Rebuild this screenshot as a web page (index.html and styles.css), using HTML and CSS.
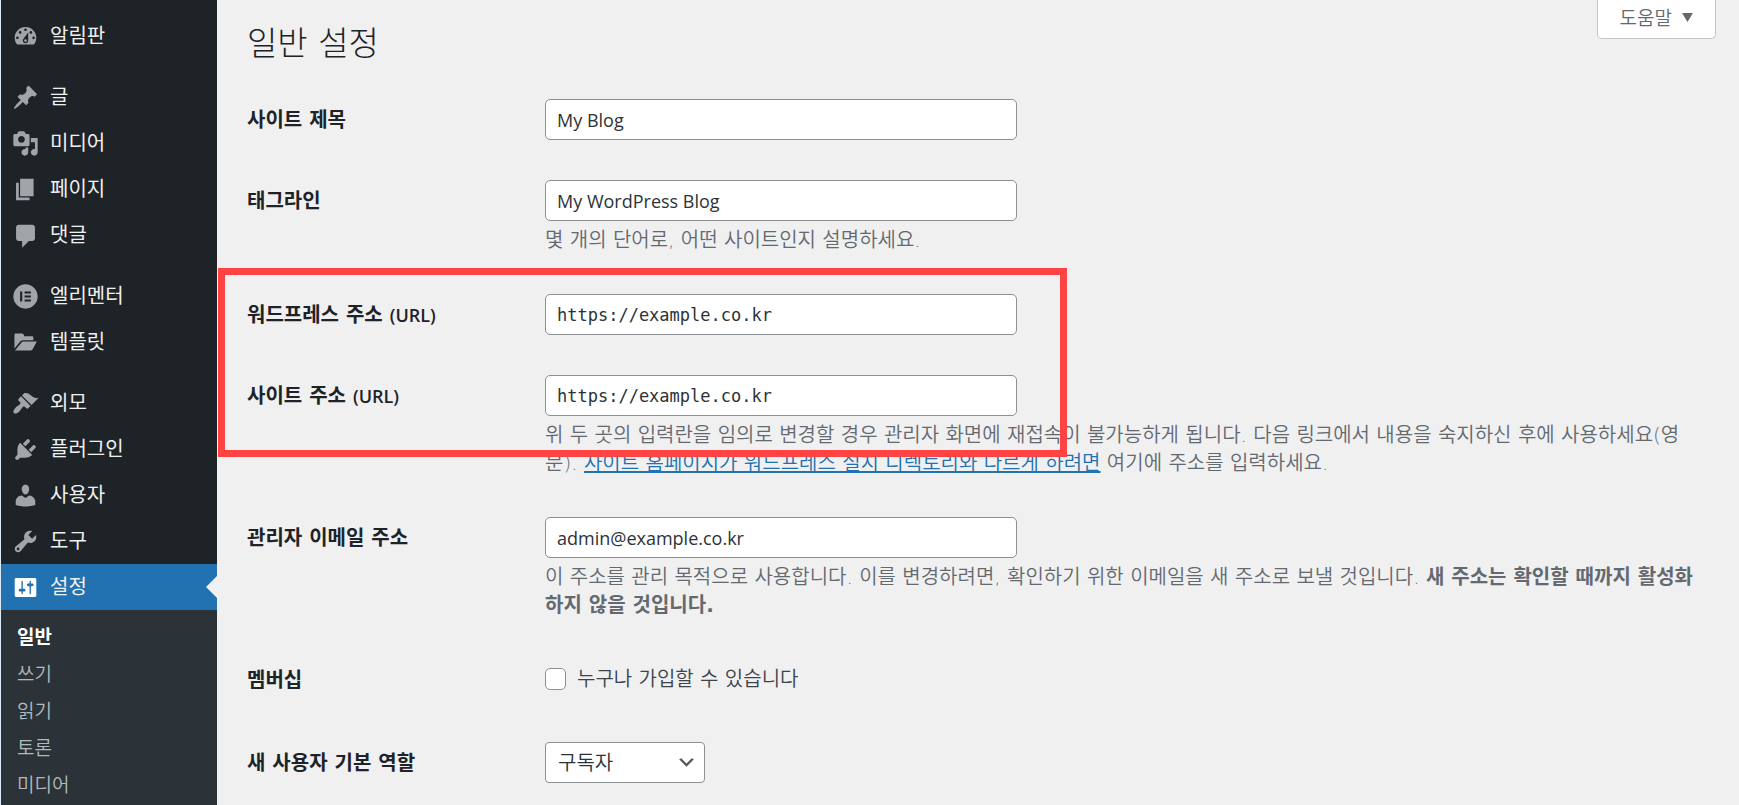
FILE: index.html
```html
<!DOCTYPE html>
<html lang="ko">
<head>
  <meta charset="UTF-8" />
  <meta name="viewport" content="width=device-width, initial-scale=1.0"/>
  <title>일반 설정</title>
  <link rel="stylesheet" href="styles.css">
</head>
<body>

  <div class="layout">
    <!-- Admin menu -->
    <nav class="sidebar">
      <ul class="menu">
        <li><a href="#"><svg viewBox="0 0 20 20"><path d="M3.76 16h12.48c1.1-1.37 1.76-3.11 1.76-5 0-4.42-3.58-8-8-8s-8 3.58-8 8c0 1.89.66 3.63 1.76 5zM10 4c.55 0 1 .45 1 1s-.45 1-1 1-1-.45-1-1 .45-1 1-1zM6 6c.55 0 1 .45 1 1s-.45 1-1 1-1-.45-1-1 .45-1 1-1zm8 0c.55 0 1 .45 1 1s-.45 1-1 1-1-.45-1-1 .45-1 1-1zm-5.37 5.55L12 7v6c0 1.1-.9 2-2 2s-2-.9-2-2c0-.57.24-1.08.63-1.45zM4 10c.55 0 1 .45 1 1s-.45 1-1 1-1-.45-1-1 .45-1 1-1zm12 0c.55 0 1 .45 1 1s-.45 1-1 1-1-.45-1-1 .45-1 1-1zm-5 3c0-.55-.45-1-1-1s-1 .45-1 1 .45 1 1 1 1-.45 1-1z"/></svg>알림판</a></li>
        <li class="group"><a href="#"><svg viewBox="0 0 20 20"><path d="M10.44 3.02l1.82-1.82 6.36 6.35-1.83 1.82c-1.05-.68-2.48-.57-3.41.36l-.75.75c-.92.93-1.04 2.35-.35 3.41l-1.83 1.82-2.41-2.41-2.8 2.79c-.42.42-3.38 2.71-3.8 2.29s1.86-3.39 2.28-3.81l2.79-2.79L4.1 9.36l1.83-1.82c1.05.69 2.48.57 3.4-.36l.75-.75c.93-.92 1.05-2.35.36-3.41z"/></svg>글</a></li>
        <li><a href="#"><svg viewBox="0 0 20 20"><path d="M13 11V4c0-.55-.45-1-1-1h-1.67L9 1H5L3.67 3H2c-.55 0-1 .45-1 1v7c0 .55.45 1 1 1h10c.55 0 1-.45 1-1zM7 4.5c1.38 0 2.5 1.12 2.5 2.5S8.38 9.5 7 9.5 4.5 8.38 4.5 7 5.62 4.5 7 4.5zM14 6h5v10.5c0 1.38-1.12 2.5-2.5 2.5S14 17.88 14 16.5s1.12-2.5 2.5-2.5c.17 0 .34.02.5.05V9h-3V6zm-4 8.05V13h2v3.5c0 1.38-1.12 2.5-2.5 2.5S7 17.88 7 16.5 8.12 14 9.5 14c.17 0 .34.02.5.05z"/></svg>미디어</a></li>
        <li><a href="#"><svg viewBox="0 0 20 20"><path d="M6 15V2h10v13H6zm-1 1h8v2H3V5h2v11z"/></svg>페이지</a></li>
        <li><a href="#"><svg viewBox="0 0 20 20"><path d="M5 2h10c1.1 0 2 .9 2 2v8c0 1.1-.9 2-2 2h-2.500l-5 5v-5H5c-1.100 0-2-.9-2-2V4c0-1.100.9-2 2-2z"/></svg>댓글</a></li>
        <li class="group"><a href="#"><svg viewBox="0 0 20 20"><path fill-rule="evenodd" d="M10 1a9 9 0 1 0 0 18 9 9 0 0 0 0-18zM6 6.300h1.600v7.400H6zM9.300 6.300H14v1.500H9.300zM9.300 9.250H14v1.500H9.300zM9.300 12.200H14v1.500H9.300z"/></svg>엘리멘터</a></li>
        <li><a href="#"><svg viewBox="0 0 20 20"><path d="M1.800 14.500V4.300c0-.6.4-1 1-1h4.400c.9 0 1.300.4 1.600 1.200l.4.900h5.600c.6 0 1 .4 1 1v1.900H8.300c-1.100 0-1.900.4-2.500 1.300zM2.200 15.900l4.700-5.800c.5-.6 1-.9 1.800-.9h9.700l-2.900 5.500c-.4.800-.9 1.200-1.800 1.200z"/></svg>템플릿</a></li>
        <li class="group"><a href="#"><svg viewBox="0 0 20 20"><path d="M14.48 11.06L7.41 3.99l1.5-1.5c.5-.56 2.3-.47 3.51.32 1.21.8 1.43 1.28 2.91 2.1 1.18.64 2.45 1.26 4.45.85zm-.71.71L6.7 4.7 4.93 6.47c-.39.39-.39 1.02 0 1.41l1.06 1.06c.39.39.39 1.03 0 1.42-.6.6-1.43 1.11-2.21 1.69-.35.26-.7.53-1.01.84C1.43 14.23.4 16.08 1.4 17.07c.99 1 2.84-.03 4.18-1.36.31-.31.58-.66.85-1.02.57-.78 1.08-1.61 1.69-2.21.39-.39 1.02-.39 1.41 0l1.06 1.06c.39.39 1.02.39 1.41 0z"/></svg>외모</a></li>
        <li><a href="#"><svg viewBox="0 0 20 20"><path d="M13.11 4.36L9.87 7.6 8 5.73l3.24-3.24c.35-.34 1.05-.2 1.56.32.52.51.66 1.21.31 1.55zm-8 1.77l.91-1.12 9.01 9.01-1.19.84c-.71.71-2.63 1.16-3.82 1.16H6.14L4.9 17.26c-.59.59-1.54.59-2.12 0-.59-.58-.59-1.53 0-2.12l1.24-1.24v-3.88c0-1.13.4-3.19 1.09-3.89zm7.26 3.97l3.24-3.24c.34-.35 1.04-.21 1.55.31.52.51.66 1.21.31 1.55l-3.24 3.25z"/></svg>플러그인</a></li>
        <li><a href="#"><svg viewBox="0 0 20 20"><path d="M10 9.25c-2.27 0-2.73-3.44-2.73-3.44C7 4.02 7.82 2 9.97 2c2.16 0 2.98 2.02 2.71 3.81 0 0-.41 3.44-2.68 3.44zm0 2.57L12.72 10c2.39 0 4.52 2.33 4.52 4.53v2.49s-3.65 1.13-7.24 1.13c-3.65 0-7.24-1.13-7.24-1.13v-2.49c0-2.25 1.94-4.48 4.47-4.48z"/></svg>사용자</a></li>
        <li><a href="#"><svg viewBox="0 0 20 20"><path d="M16.68 9.77c-1.34 1.34-3.3 1.67-4.95.99l-5.41 6.52c-.99.99-2.59.99-3.58 0s-.99-2.59 0-3.57l6.52-5.42c-.68-1.65-.35-3.61.99-4.95 1.28-1.28 3.12-1.62 4.72-1.06l-2.89 2.89 2.82 2.82 2.86-2.87c.53 1.58.18 3.39-1.08 4.65zM3.81 16.21c.4.39 1.04.39 1.43 0 .4-.4.4-1.04 0-1.43-.39-.4-1.03-.4-1.43 0-.39.39-.39 1.03 0 1.43z"/></svg>도구</a></li>
        <li class="current"><a href="#"><svg viewBox="0 0 20 20"><path d="M18 16V4c0-.55-.45-1-1-1H3c-.55 0-1 .45-1 1v12c0 .55.45 1 1 1h14c.55 0 1-.45 1-1zM8 11h1c.55 0 1 .45 1 1s-.45 1-1 1H8v1.5c0 .28-.22.5-.5.5s-.5-.22-.5-.5V13H6c-.55 0-1-.45-1-1s.45-1 1-1h1V5.5c0-.28.22-.5.5-.5s.5.22.5.5V11zm5-2h-1c-.55 0-1-.45-1-1s.45-1 1-1h1V5.5c0-.28.22-.5.5-.5s.5.22.5.5V7h1c.55 0 1 .45 1 1s-.45 1-1 1h-1v5.5c0 .28-.22.5-.5.5s-.5-.22-.5-.5V9z"/></svg>설정</a></li>
      </ul>
      <ul class="submenu">
        <li><a href="#" class="active">일반</a></li>
        <li><a href="#">쓰기</a></li>
        <li><a href="#">읽기</a></li>
        <li><a href="#">토론</a></li>
        <li><a href="#">미디어</a></li>
      </ul>
    </nav>

    <main class="content">
      <button type="button" class="help-btn">도움말 <svg viewBox="0 0 12 10"><path d="M0 0h12L6 10z"/></svg></button>
      <h1>일반 설정</h1>

      <form class="settings">
        <div class="row">
          <label class="row-title" for="blogname">사이트 제목</label>
          <div class="field">
            <input type="text" id="blogname" value="My Blog">
          </div>
        </div>

        <div class="row">
          <label class="row-title" for="tagline">태그라인</label>
          <div class="field">
            <input type="text" id="tagline" value="My WordPress Blog">
            <p>몇 개의 단어로, 어떤 사이트인지 설명하세요.</p>
          </div>
        </div>

        <!-- URL settings, outlined in red -->
        <div class="url-rows">
          <div class="row">
            <label class="row-title" for="siteurl">워드프레스 주소 <span class="latin">(URL)</span></label>
            <div class="field">
              <input type="url" id="siteurl" class="code" value="https://example.co.kr">
            </div>
          </div>

          <div class="row">
            <label class="row-title" for="home">사이트 주소 <span class="latin">(URL)</span></label>
            <div class="field">
              <input type="url" id="home" class="code" value="https://example.co.kr">
              <p>위 두 곳의 입력란을 임의로 변경할 경우 관리자 화면에 재접속이 불가능하게 됩니다. 다음 링크에서 내용을 숙지하신 후에 사용하세요(영문). <a href="#">사이트 홈페이지가 워드프레스 설치 디렉토리와 다르게 하려면</a> 여기에 주소를 입력하세요.</p>
            </div>
          </div>
          <div class="highlight"></div>
        </div>

        <div class="row">
          <label class="row-title" for="email">관리자 이메일 주소</label>
          <div class="field">
            <input type="email" id="email" value="admin@example.co.kr">
            <p>이 주소를 관리 목적으로 사용합니다. 이를 변경하려면, 확인하기 위한 이메일을 새 주소로 보낼 것입니다. <strong>새 주소는 확인할 때까지 활성화하지 않을 것입니다.</strong></p>
          </div>
        </div>

        <div class="row">
          <span class="row-title">멤버십</span>
          <div class="field">
            <label class="check"><input type="checkbox" id="membership">누구나 가입할 수 있습니다</label>
          </div>
        </div>

        <div class="row">
          <label class="row-title" for="role">새 사용자 기본 역할</label>
          <div class="field">
            <div class="select">
              <select id="role">
                <option>구독자</option>
              </select>
              <svg viewBox="0 0 20 20"><path d="M5 6l5 5 5-5 2 1-7 7-7-7z"/></svg>
            </div>
          </div>
        </div>
      </form>
    </main>
  </div>

</body>
</html>
```
FILE: styles.css
```css
* {
  box-sizing: border-box;
}

body {
  margin: 0;
  background: #f0f0f1;
  color: #3c434a;
  font-family: "DejaVu Sans", "Noto Sans CJK KR", sans-serif;
  font-size: 20px;
  font-weight: 350;
  line-height: 28px;
}

ul {
  list-style: none;
  margin: 0;
  padding: 0;
}

.layout {
  display: flex;
  height: 100vh;
  overflow: hidden;
}

/* Sidebar */
.sidebar {
  flex: none;
  display: flex;
  flex-direction: column;
  width: 217px;
  padding-top: 13px;
  background: #1d2327;
  border-left: 1px solid #dcebf7;
}

.menu a {
  display: flex;
  align-items: center;
  gap: 11px;
  height: 46px;
  padding-left: 11px;
  color: #f0f0f1;
  font-weight: 400;
  text-decoration: none;
}

.menu svg {
  width: 27px;
  height: 27px;
  fill: #a0a5aa;
}

.menu .group {
  margin-top: 15px;
}

.menu .current {
  position: relative;
  background: #2271b1;
}

.menu .current svg {
  fill: #fff;
}

.menu .current::after {
  content: "";
  position: absolute;
  right: 0;
  top: 12px;
  border: 11px solid transparent;
  border-left-width: 0;
  border-right-color: #f0f0f1;
}

.submenu {
  flex: 1;
  padding: 9px 0 0 16px;
  background: #2c3338;
}

.submenu a {
  display: block;
  color: #b4b9be;
  font-size: 19px;
  line-height: 37px;
  text-decoration: none;
}

.submenu .active {
  color: #fff;
  font-weight: 700;
}

/* Content */
.content {
  position: relative;
  flex: 1;
  padding: 24px 40px 0 30px;
}

.help-btn {
  position: absolute;
  top: 0;
  right: 23px;
  display: flex;
  align-items: center;
  gap: 10px;
  height: 39px;
  padding: 0 22px 3px;
  background: #fff;
  border: 1px solid #c3c4c7;
  border-top: none;
  border-radius: 0 0 5px 5px;
  color: #646970;
  font: inherit;
  font-size: 19px;
}

.help-btn svg {
  width: 11px;
  height: 9px;
  fill: #646970;
}

h1 {
  margin: 0 0 15px;
  color: #1d2327;
  font-size: 33px;
  font-weight: 300;
  line-height: 40px;
}

.row {
  display: flex;
  padding: 20px 0;
}

.row-title {
  flex: none;
  width: 298px;
  padding-top: 7px;
  color: #1d2327;
  font-weight: 700;
}

.latin {
  font-family: "Open Sans", sans-serif;
  font-size: 18px;
  font-weight: 600;
}

.field {
  flex: 1;
}

.field input[type="text"],
.field input[type="url"],
.field input[type="email"] {
  display: block;
  width: 472px;
  height: 41px;
  padding: 0 11px;
  background: #fff;
  border: 1px solid #8c8f94;
  border-radius: 5px;
  color: #2c3338;
  font-family: "Open Sans", "Noto Sans CJK KR", sans-serif;
  font-size: 18px;
  font-weight: 400;
}

.field input.code {
  font-family: "DejaVu Sans Mono", monospace;
  font-size: 17px;
}

.field p {
  margin: 5px 0 0;
  color: #646970;
}

.field p a {
  color: #2271b1;
}

.field strong {
  font-weight: 700;
}

.url-rows {
  position: relative;
}

.highlight {
  position: absolute;
  top: -6px;
  left: -29px;
  width: 849px;
  height: 189px;
  border: 7px solid #ff4242;
  pointer-events: none;
}

.check {
  display: flex;
  align-items: center;
  gap: 11px;
  height: 39px;
  margin-bottom: 4px;
}

.check input {
  appearance: none;
  width: 21px;
  height: 22px;
  margin: 0;
  background: #fff;
  border: 1px solid #8c8f94;
  border-radius: 5px;
}

.select {
  position: relative;
  width: 160px;
}

.select select {
  appearance: none;
  display: block;
  width: 100%;
  height: 41px;
  padding: 0 32px 0 12px;
  background: #fff;
  border: 1px solid #8c8f94;
  border-radius: 4px;
  color: #2c3338;
  font: inherit;
}

.select svg {
  position: absolute;
  top: 10px;
  right: 8px;
  width: 21px;
  height: 21px;
  fill: #50575e;
  pointer-events: none;
}
```
